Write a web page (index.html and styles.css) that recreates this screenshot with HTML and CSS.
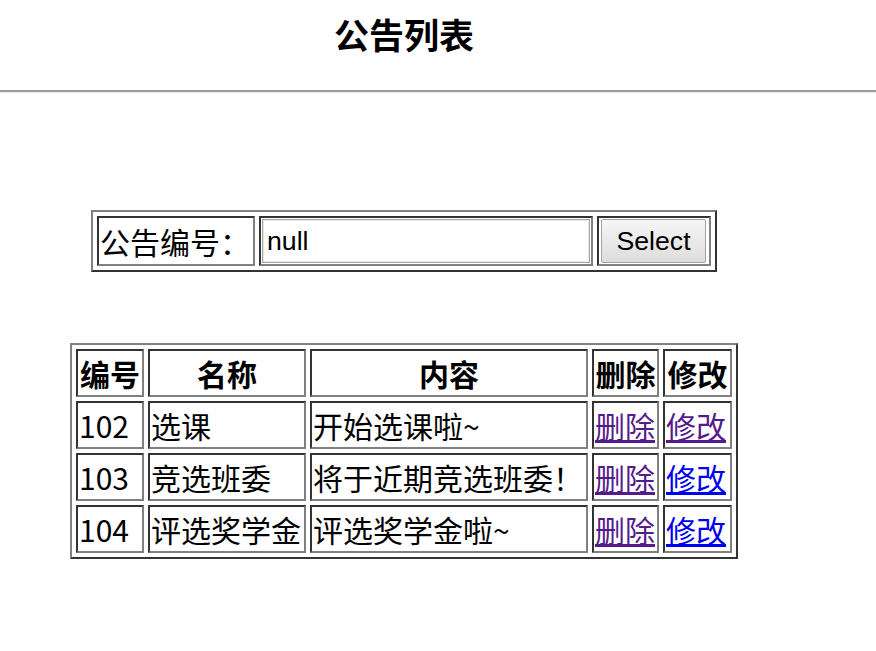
FILE: index.html
```html
<!DOCTYPE html>
<html lang="zh-CN">
<head>
<meta charset="utf-8">
<title>公告列表</title>
<link rel="stylesheet" href="styles.css">
</head>
<body>
<div class="header">
  <div class="title">公告列表</div>
</div>
<div class="rule"></div>
<div class="main">
  <table class="grid search">
    <tr>
      <td class="label">公告编号：</td>
      <td class="field"><input class="input" type="text" value="null"></td>
      <td class="btn-cell"><button class="btn" type="button">Select</button></td>
    </tr>
  </table>

  <table class="grid list">
    <tr>
      <th class="c-id">编号</th>
      <th class="c-name">名称</th>
      <th class="c-content">内容</th>
      <th class="c-del">删除</th>
      <th class="c-edit">修改</th>
    </tr>
    <tr>
      <td>102</td>
      <td>选课</td>
      <td>开始选课啦~</td>
      <td><a class="link visited" href="#">删除</a></td>
      <td><a class="link visited" href="#">修改</a></td>
    </tr>
    <tr>
      <td>103</td>
      <td>竞选班委</td>
      <td>将于近期竞选班委！</td>
      <td><a class="link visited" href="#">删除</a></td>
      <td><a class="link fresh" href="#">修改</a></td>
    </tr>
    <tr>
      <td>104</td>
      <td>评选奖学金</td>
      <td>评选奖学金啦~</td>
      <td><a class="link visited" href="#">删除</a></td>
      <td><a class="link fresh" href="#">修改</a></td>
    </tr>
  </table>
</div>
</body>
</html>
```

FILE: styles.css
```css
html, body {
  margin: 0;
  padding: 0;
  background: #ffffff;
  color: #000000;
  font-family: "Noto Sans CJK SC", "Noto Sans", sans-serif;
}

.header {
  height: 90px;
}

.title {
  width: 808px;
  padding-top: 9px;
  text-align: center;
  font-size: 35px;
  font-weight: bold;
  line-height: 50px;
}

.rule {
  height: 2px;
  background: #9a9a9a;
  border-bottom: 1px solid #ececec;
}

.main {
  width: 808px;
  padding-top: 117px;
}

.grid {
  margin: 0 auto;
  border-collapse: separate;
  border-spacing: 4px;
  border: 2px solid;
  border-color: #808080 #333333 #333333 #808080;
}

.grid td,
.grid th {
  border: 2px solid;
  border-color: #333333 #808080 #808080 #333333;
  padding: 1px;
}

/* search form */
.search .label {
  width: 152px;
  font-size: 30px;
  line-height: 44px;
  white-space: nowrap;
}

.search .field {
  width: 328px;
}

.search .btn-cell {
  width: 108px;
}

.input {
  display: block;
  box-sizing: border-box;
  width: 328px;
  height: 44px;
  margin: 0;
  padding: 0 4px;
  border: 1px solid #a6a6a6;
  box-shadow: inset 0 0 0 1px #e6e6e6;
  font-family: "Liberation Sans", Arial, sans-serif;
  font-size: 26.67px;
  color: #000000;
  background: #ffffff;
  outline: none;
}

.btn {
  display: block;
  box-sizing: border-box;
  width: 105px;
  height: 44px;
  margin: 0 0 0 1px;
  padding: 0;
  border: 1px solid #a3a3a3;
  border-radius: 2px;
  background: linear-gradient(#f6f6f6, #dddddd);
  font-family: "Liberation Sans", Arial, sans-serif;
  font-size: 26.67px;
  color: #000000;
}

/* list table */
.list {
  margin-top: 71px;
}

.list td,
.list th {
  font-size: 30px;
  line-height: 42px;
  white-space: nowrap;
}

.list td {
  text-align: left;
}

.list th {
  font-weight: bold;
  text-align: center;
}

.c-id { width: 62px; }
.c-name { width: 152px; }
.c-content { width: 272px; }
.c-del { width: 61px; }
.c-edit { width: 63px; }

.link {
  text-decoration: underline;
}

.visited {
  color: #551a8b;
}

.fresh {
  color: #0000ee;
}
```
